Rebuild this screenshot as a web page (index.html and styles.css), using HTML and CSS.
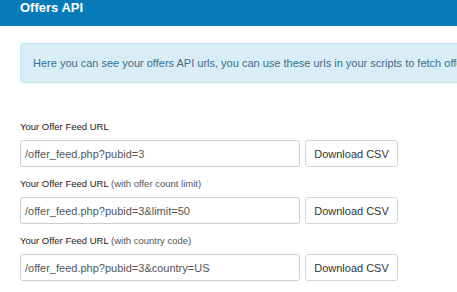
FILE: index.html
```html
<!DOCTYPE html>
<html lang="en">
<head>
  <meta charset="UTF-8">
  <meta name="viewport" content="width=device-width, initial-scale=1.0">
  <title>Offers API</title>
  <link rel="stylesheet" href="styles.css">
</head>
<body>
  <div class="header">
    <h1>Offers API</h1>
  </div>

  <div class="content">
    <div class="alert">
      Here you can see your offers API urls, you can use these urls in your scripts to fetch offers from our system.
    </div>

    <div class="form-group">
      <label>Your Offer Feed URL</label>
      <div class="field-row">
        <input type="text" class="field" value="/offer_feed.php?pubid=3" readonly>
        <button class="button">Download CSV</button>
      </div>
    </div>

    <div class="form-group">
      <label>Your Offer Feed URL <span class="hint">(with offer count limit)</span></label>
      <div class="field-row">
        <input type="text" class="field" value="/offer_feed.php?pubid=3&amp;limit=50" readonly>
        <button class="button">Download CSV</button>
      </div>
    </div>

    <div class="form-group">
      <label>Your Offer Feed URL <span class="hint">(with country code)</span></label>
      <div class="field-row">
        <input type="text" class="field" value="/offer_feed.php?pubid=3&amp;country=US" readonly>
        <button class="button">Download CSV</button>
      </div>
    </div>
  </div>
</body>
</html>
```

FILE: styles.css
```css
html {
  overflow: hidden;
}
body {
  font-family: "Liberation Sans", Arial, sans-serif;
  margin: 0;
  padding: 0;
  background-color: #fff;
  min-width: 760px;
  color: #333;
}
.header {
  height: 26px;
  padding: 0 20px;
  background-color: #077ab8;
}
.header h1 {
  margin: 0;
  font-size: 13px;
  line-height: 16px;
  font-weight: bold;
  color: #fff;
}
.content {
  padding: 17px 20px 0;
}
.alert {
  padding: 12px 12px;
  font-size: 11px;
  line-height: 14px;
  color: #3b6d88;
  background-color: #d9edf7;
  border: 1px solid #bce8f1;
  border-radius: 3px;
  white-space: nowrap;
  margin-bottom: 38px;
}
.form-group {
  margin-bottom: 11px;
}
.form-group label {
  display: block;
  font-size: 9.5px;
  line-height: 12px;
  color: #222;
  margin-bottom: 7px;
}
.hint {
  color: #555;
}
.field-row {
  display: flex;
  gap: 5px;
}
.field {
  box-sizing: border-box;
  width: 280px;
  height: 27px;
  padding: 0 4px;
  font-family: "Liberation Sans", Arial, sans-serif;
  font-size: 11px;
  color: #555;
  background-color: #fff;
  border: 1px solid #ccc;
  border-radius: 3px;
  outline: none;
}
.button {
  box-sizing: border-box;
  width: 93px;
  height: 27px;
  padding: 0;
  font-family: "Liberation Sans", Arial, sans-serif;
  font-size: 11px;
  color: #333;
  background-color: #fff;
  border: 1px solid #d5d5d5;
  border-radius: 3px;
  cursor: pointer;
}
.button:hover {
  background-color: #e6e6e6;
}
```
